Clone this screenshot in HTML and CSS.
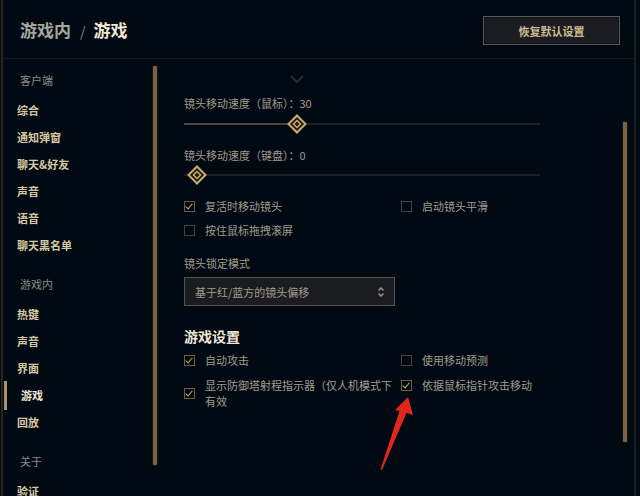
FILE: index.html
```html
<!DOCTYPE html>
<html lang="zh-CN">
  <head>
    <meta charset="utf-8">
    <title>游戏内 / 游戏</title>
    <link rel="stylesheet" href="styles.css">
  </head>
  <body>
    <div class="app">
      <header class="top">
        <h1 class="crumb"><span class="crumbParent">游戏内</span><span class="crumbSep">/</span><span class="crumbCur">游戏</span></h1>
        <button class="resetBtn">恢复默认设置</button>
      </header>

      <div class="main">
        <aside class="sidebar">
          <nav class="nav">
            <div class="navLabel">客户端</div>
            <div class="navItem">综合</div>
            <div class="navItem">通知弹窗</div>
            <div class="navItem">聊天&amp;好友</div>
            <div class="navItem">声音</div>
            <div class="navItem">语音</div>
            <div class="navItem">聊天黑名单</div>

            <div class="navLabel group">游戏内</div>
            <div class="navItem">热键</div>
            <div class="navItem">声音</div>
            <div class="navItem">界面</div>
            <div class="navItem active">游戏</div>
            <div class="navItem">回放</div>

            <div class="navLabel group">关于</div>
            <div class="navItem">验证</div>
          </nav>
          <div class="scrollbar sideScroll"></div>
        </aside>

        <section class="content">
          <svg class="chevron" width="14" height="8" viewBox="0 0 14 8">
            <path d="M1 1 L7 7 L13 1" fill="none" stroke="#232c33" stroke-width="2"/>
          </svg>

          <div class="fieldLabel first">镜头移动速度（鼠标）：30</div>
          <div class="slider">
            <div class="track"><div class="fill" style="width: 113px"></div></div>
            <svg class="thumb" style="left: 102px" width="22" height="22" viewBox="0 0 22 22">
              <rect x="5" y="5" width="12" height="12" transform="rotate(45 11 11)" fill="#1e1a12" stroke="#c8aa6e" stroke-width="2"/>
              <rect x="8.5" y="8.5" width="5" height="5" transform="rotate(45 11 11)" fill="none" stroke="#c8aa6e" stroke-width="1.5"/>
            </svg>
          </div>

          <div class="fieldLabel second">镜头移动速度（键盘）：0</div>
          <div class="slider tight">
            <div class="track"><div class="fill" style="width: 0px"></div></div>
            <svg class="thumb" style="left: 2px" width="22" height="22" viewBox="0 0 22 22">
              <rect x="5" y="5" width="12" height="12" transform="rotate(45 11 11)" fill="#1e1a12" stroke="#c8aa6e" stroke-width="2"/>
              <rect x="8.5" y="8.5" width="5" height="5" transform="rotate(45 11 11)" fill="none" stroke="#c8aa6e" stroke-width="1.5"/>
            </svg>
          </div>

          <div class="checks cameraChecks">
            <label class="check"><span class="box on"></span><span>复活时移动镜头</span></label>
            <label class="check"><span class="box"></span><span>启动镜头平滑</span></label>
            <label class="check"><span class="box"></span><span>按住鼠标拖拽滚屏</span></label>
          </div>

          <div class="fieldLabel lockLabel">镜头锁定模式</div>
          <div class="select">
            <span>基于红/蓝方的镜头偏移</span>
            <svg width="8" height="12" viewBox="0 0 8 12">
              <path d="M1.5 4.5 L4 2 L6.5 4.5 M1.5 7.5 L4 10 L6.5 7.5" fill="none" stroke="#a09b8c" stroke-width="1.3"/>
            </svg>
          </div>

          <h2 class="sectionTitle">游戏设置</h2>
          <div class="checks gameChecks">
            <label class="check"><span class="box on"></span><span>自动攻击</span></label>
            <label class="check"><span class="box"></span><span>使用移动预测</span></label>
            <label class="check"><span class="box on"></span><span class="wrapText">显示防御塔射程指示器（仅人机模式下有效</span></label>
            <label class="check alignTop"><span class="box on"></span><span>依据鼠标指针攻击移动</span></label>
          </div>
        </section>

        <div class="scrollbar mainScroll"></div>
      </div>
    </div>

    <svg class="annotation" width="640" height="496" viewBox="0 0 640 496">
      <polygon points="408,397 413,415 406.5,413 382,470 380.5,469.5 399.5,411 395,410" fill="#e3261d"/>
    </svg>
  </body>
</html>
```

FILE: styles.css
```css
html, body {
  margin: 0;
  padding: 0;
}

body {
  width: 640px;
  height: 496px;
  overflow: hidden;
  position: relative;
  background: #010a13;
  font-family: "Noto Sans CJK SC", "Noto Sans", sans-serif;
  font-size: 11px;
  color: #a09b8c;
}

.app {
  margin-left: 1px;
  width: 631px;
  height: 496px;
  border-left: 2px solid #2a261e;
  border-right: 2px solid #1c1f24;
  display: flex;
  flex-direction: column;
}

/* header */
.top {
  height: 55px;
  padding: 3px 14px 0 17px;
  border-bottom: 1px solid #141a20;
  display: flex;
  align-items: center;
  justify-content: space-between;
  flex-shrink: 0;
}

.crumb {
  margin: 0;
  font-size: 17px;
  font-weight: bold;
  line-height: 20px;
}

.crumbParent {
  color: #a8a59c;
}

.crumbSep {
  color: #8a8779;
  font-weight: normal;
  font-size: 14px;
  margin: 0 8px 0 9px;
}

.crumbCur {
  color: #f0e6d2;
}

.resetBtn {
  width: 137px;
  height: 29px;
  background: #1b1d22;
  border: 1px solid #5b5a56;
  box-shadow: inset 0 0 0 1px #101216;
  color: #cdbe91;
  font-family: inherit;
  font-size: 11px;
  font-weight: bold;
  padding: 0;
}

/* body */
.main {
  flex: 1;
  display: flex;
  min-height: 0;
}

.sidebar {
  width: 157px;
  display: flex;
  flex-shrink: 0;
}

.nav {
  flex: 1;
  padding-top: 8px;
}

.navLabel {
  padding-left: 17px;
  line-height: 27px;
  margin-bottom: 3px;
  color: #8c8a83;
  font-size: 11px;
}

.navLabel.group {
  margin-top: 12px;
}

.navItem {
  position: relative;
  padding-left: 14px;
  line-height: 27px;
  font-weight: bold;
  color: #d6c9a2;
}

.navItem.active {
  padding-left: 18px;
  color: #f0e6d2;
}

.navItem.active::before {
  content: "";
  position: absolute;
  left: 1px;
  top: -1px;
  width: 3px;
  height: 29px;
  background: #a8946a;
}

.scrollbar {
  width: 4px;
  background: #786444;
  border-radius: 1px;
  box-shadow: 0 0 0 1px #1a150c;
}

.sideScroll {
  margin: 7px 3px 0 0;
  height: 399px;
}

.mainScroll {
  margin: 63px 7px 0 0;
  height: 320px;
  flex-shrink: 0;
}

/* content */
.content {
  flex: 1;
  padding-left: 24px;
}

.chevron {
  display: block;
  margin: 16px 0 0 106px;
}

.fieldLabel {
  line-height: 16px;
  color: #a09b8c;
}

.fieldLabel.first {
  margin-top: 12px;
}

.fieldLabel.second {
  margin-top: 13px;
}

.slider {
  position: relative;
  width: 356px;
  height: 20px;
  margin-top: 3px;
  display: flex;
  align-items: center;
}

.slider.tight {
  margin-top: 2px;
}

.track {
  width: 100%;
  height: 2px;
  background: #1c2128;
}

.fill {
  height: 2px;
  background: #4a4638;
}

.thumb {
  position: absolute;
  top: -1px;
}

.checks {
  display: grid;
  grid-template-columns: 217px 1fr;
  row-gap: 4px;
}

.cameraChecks {
  margin-top: 11px;
}

.check {
  display: flex;
  align-items: center;
  gap: 10px;
  line-height: 16px;
  min-height: 20px;
  color: #a09b8c;
}

.check.alignTop {
  align-self: start;
  min-height: 16px;
}

.box {
  position: relative;
  width: 9px;
  height: 9px;
  border: 1px solid #45423b;
  flex-shrink: 0;
}

.box.on {
  border-color: #6e5c3a;
}

.box.on::after {
  content: "";
  position: absolute;
  left: 2px;
  top: 0px;
  width: 3px;
  height: 6px;
  border-right: 1.5px solid #c8aa6e;
  border-bottom: 1.5px solid #c8aa6e;
  transform: rotate(40deg);
}

.wrapText {
  width: 190px;
}

.lockLabel {
  margin-top: 15px;
}

.select {
  box-sizing: border-box;
  width: 211px;
  height: 29px;
  margin-top: 6px;
  padding: 0 9px 0 10px;
  background: #1a1c20;
  border: 1px solid #55534d;
  display: flex;
  align-items: center;
  justify-content: space-between;
  color: #a09b8c;
}

.sectionTitle {
  margin: 20px 0 0;
  font-size: 14px;
  line-height: 20px;
  font-weight: bold;
  color: #f0e6d2;
}

.gameChecks {
  margin-top: 4px;
  row-gap: 7px;
}

.annotation {
  position: absolute;
  left: 0;
  top: 0;
  pointer-events: none;
}
```
